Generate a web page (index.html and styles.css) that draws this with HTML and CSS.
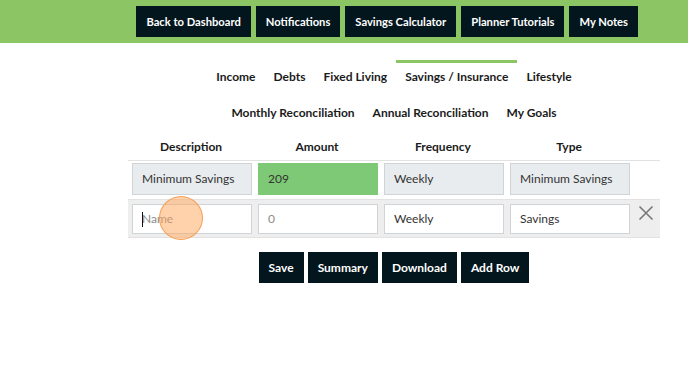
FILE: index.html
```html
<!DOCTYPE html>
<html>
<head>
<meta charset="utf-8">
<link rel="stylesheet" href="styles.css">
</head>
<body>
<header class="topbar">
  <a class="btn">Back to Dashboard</a>
  <a class="btn">Notifications</a>
  <a class="btn">Savings Calculator</a>
  <a class="btn">Planner Tutorials</a>
  <a class="btn">My Notes</a>
</header>
<main class="main">
  <nav class="tabs">
    <span class="tab">Income</span>
    <span class="tab">Debts</span>
    <span class="tab">Fixed Living</span>
    <span class="tab active">Savings / Insurance</span>
    <span class="tab">Lifestyle</span>
  </nav>
  <nav class="tabs">
    <span class="tab">Monthly Reconciliation</span>
    <span class="tab">Annual Reconciliation</span>
    <span class="tab">My Goals</span>
  </nav>
  <div class="grid">
    <div class="th">Description</div>
    <div class="th">Amount</div>
    <div class="th">Frequency</div>
    <div class="th">Type</div>
    <div class="th"></div>

    <div class="row">
      <div class="cell"><div class="field ro">Minimum Savings</div></div>
      <div class="cell"><div class="field green">209</div></div>
      <div class="cell"><div class="field ro">Weekly</div></div>
      <div class="cell"><div class="field ro">Minimum Savings</div></div>
      <div class="cell"></div>
    </div>
    <div class="row alt">
      <div class="cell"><div class="field ph"><span class="caret"></span>Name</div></div>
      <div class="cell"><div class="field ph">0</div></div>
      <div class="cell"><div class="field">Weekly</div></div>
      <div class="cell"><div class="field">Savings</div></div>
      <div class="cell xcell">
        <svg width="16" height="16" viewBox="0 0 16 16"><path d="M1.5 1.5 L14.5 14.5 M14.5 1.5 L1.5 14.5" stroke="#777" stroke-width="1.6" fill="none"/></svg>
      </div>
    </div>
  </div>
  <div class="actions">
    <a class="btn">Save</a>
    <a class="btn">Summary</a>
    <a class="btn">Download</a>
    <a class="btn">Add Row</a>
  </div>
</main>
<div class="click"></div>
</body>
</html>
```
FILE: styles.css
```css
* { box-sizing: border-box; }
body {
  margin: 0;
  font-family: Lato, "Open Sans", sans-serif;
  font-size: 12px;
  color: #222;
  background: #fff;
  position: relative;
  width: 688px;
  height: 365px;
  overflow: hidden;
}
.topbar {
  height: 43px;
  background: #8cc563;
  display: flex;
  justify-content: flex-end;
  align-items: flex-start;
  padding: 6px 50px 0 0;
  gap: 5px;
}
.btn {
  display: flex;
  align-items: center;
  height: 31px;
  padding: 0 10px;
  background: #03161d;
  color: #fff;
  font-weight: 700;
  font-size: 12px;
  white-space: nowrap;
}
.topbar .btn {
  font-size: 11.2px;
  padding: 0 10px;
}
.main {
  margin-left: 100px;
  display: flex;
  flex-direction: column;
  align-items: center;
  padding-top: 17px;
}
.tabs {
  display: flex;
  justify-content: center;
}
.tab {
  border-top: 3px solid transparent;
  padding: 6px 9px 11px;
  line-height: 16px;
  font-weight: 700;
  color: #1b1b1b;
  white-space: nowrap;
}
.tab.active { border-top-color: #8cc563; }
.grid {
  display: grid;
  grid-template-columns: 126px 126px 126px 126px 28px;
  width: 532px;
}
.th {
  height: 28px;
  line-height: 28px;
  text-align: center;
  font-weight: 700;
  color: #1b1b1b;
  padding-top: 1px;
}
.row {
  display: contents;
}
.cell {
  border-top: 1px solid #e2e2e2;
  padding: 2px 2px 4px 4px;
  height: 39px;
}
.row.alt .cell { background: #eeeeee; border-bottom: 1px solid #e2e2e2; }
.field {
  height: 32px;
  line-height: 30px;
  border: 1px solid #cfd4d8;
  padding: 0 9px;
  background: #fff;
  color: #333;
  white-space: nowrap;
  overflow: hidden;
  position: relative;
}
.row.alt .field { height: 30px; line-height: 28px; margin-top: 2px; }
.field.ro { background: #e8ecef; }
.field.green { background: #7ec975; border-color: #7ec975; }
.field.ph { color: #8a8a8a; }
.caret {
  position: absolute;
  left: 9px;
  top: 7px;
  width: 1px;
  height: 15px;
  background: #111;
}
.xcell {
  display: flex;
  align-items: flex-start;
  justify-content: center;
  padding: 5px 0 0 0;
}
.actions {
  display: flex;
  gap: 4px;
  margin-top: 14px;
}
.click {
  position: absolute;
  left: 159px;
  top: 196px;
  width: 44px;
  height: 44px;
  border-radius: 50%;
  background: rgba(255, 165, 90, 0.5);
  border: 1.5px solid rgba(245, 150, 70, 0.85);
}
```
